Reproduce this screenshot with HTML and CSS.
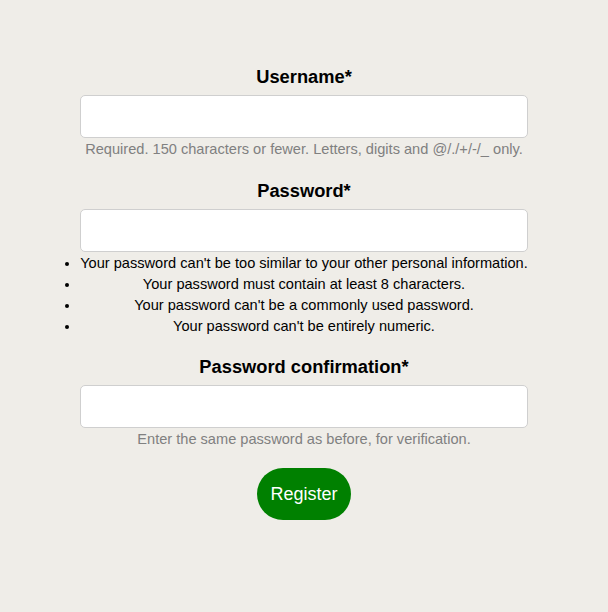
FILE: index.html
```html
<!DOCTYPE html>
<html>
<head>
<meta charset="utf-8">
<link rel="stylesheet" href="styles.css">
</head>
<body>
<form class="register">
  <div class="group group-user">
    <label class="label">Username*</label>
    <input class="field" type="text">
    <div class="help">Required. 150 characters or fewer. Letters, digits and @/./+/-/_ only.</div>
  </div>
  <div class="group">
    <label class="label">Password*</label>
    <input class="field" type="password">
    <ul class="rules">
      <li>Your password can't be too similar to your other personal information.</li>
      <li>Your password must contain at least 8 characters.</li>
      <li>Your password can't be a commonly used password.</li>
      <li>Your password can't be entirely numeric.</li>
    </ul>
  </div>
  <div class="group group-confirm">
    <label class="label">Password confirmation*</label>
    <input class="field" type="password">
    <div class="help">Enter the same password as before, for verification.</div>
  </div>
  <button class="submit" type="button">Register</button>
</form>
</body>
</html>
```

FILE: styles.css
```css
html, body {
  background: #efede8;
}
body {
  margin: 8px;
  font-family: "Liberation Sans", Arial, sans-serif;
  color: #000;
}
.register {
  width: 448px;
  margin: 58px auto 0;
  display: flex;
  flex-direction: column;
  align-items: center;
  text-align: center;
}
.group {
  width: 100%;
  display: flex;
  flex-direction: column;
  margin-bottom: 19px;
}
.group-user {
  margin-bottom: 20px;
}
.group-confirm {
  margin-bottom: 18px;
}
.label {
  display: block;
  font-size: 18.3px;
  font-weight: bold;
  line-height: 22px;
  margin-bottom: 7px;
}
.field {
  box-sizing: border-box;
  width: 100%;
  height: 43px;
  margin: 0 0 1px;
  border: 1px solid #cfcfcf;
  border-radius: 5px;
  background: #fff;
  font-size: 16px;
  padding: 8px 10px;
}
.help {
  font-size: 14.6px;
  line-height: 21px;
  color: #808080;
}
.rules {
  margin: 0;
  padding: 0;
  font-size: 14.6px;
  line-height: 21px;
  list-style: disc outside;
}
.submit {
  width: 94px;
  height: 52px;
  border: none;
  border-radius: 26px;
  background: #008000;
  color: #fff;
  font-family: "Liberation Sans", Arial, sans-serif;
  font-size: 18px;
  padding: 0;
}
```
